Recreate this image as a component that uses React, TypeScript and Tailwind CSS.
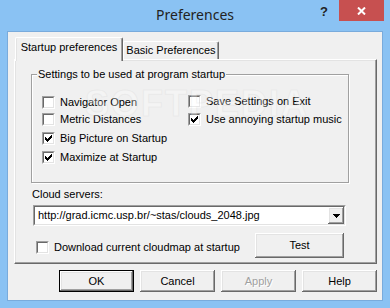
import React from "react";

const font = "font-['Liberation_Sans',Arial,sans-serif] text-[11px] leading-[13px] text-black";

function Check() {
  return (
    <svg width="7" height="7" viewBox="0 0 7 7" shapeRendering="crispEdges">
      <path
        d="M0 2h1v3h-1z M1 3h1v3h-1z M2 4h1v3h-1z M3 3h1v3h-1z M4 2h1v3h-1z M5 1h1v3h-1z M6 0h1v3h-1z"
        fill="#000"
      />
    </svg>
  );
}

function Box({ checked }: { checked?: boolean }) {
  return (
    <span className="flex w-[13px] h-[13px] shrink-0 border border-t-[#a0a0a0] border-l-[#a0a0a0] border-r-white border-b-white">
      <span className="flex flex-1 items-center justify-center bg-white border border-t-[#696969] border-l-[#696969] border-r-[#e3e3e3] border-b-[#e3e3e3]">
        {checked && <Check />}
      </span>
    </span>
  );
}

function CheckRow({ label, checked, className = "" }: { label: string; checked?: boolean; className?: string }) {
  return (
    <div className={`flex items-center ${className}`}>
      <Box checked={checked} />
      <span className="ml-[5px] whitespace-nowrap">{label}</span>
    </div>
  );
}

const raised =
  "bg-[#f0f0f0] shadow-[inset_-1px_-1px_0_#696969,inset_1px_1px_0_#ffffff,inset_-2px_-2px_0_#a0a0a0,inset_2px_2px_0_#e3e3e3]";

function Btn({ label, def, disabled }: { label: string; def?: boolean; disabled?: boolean }) {
  if (def) {
    return (
      <div className="w-[75px] h-[22px] border border-[#000] flex">
        <div className={`flex-1 flex items-center justify-center ${raised}`}>{label}</div>
      </div>
    );
  }
  return (
    <div
      className={`w-[75px] h-[22px] flex items-center justify-center ${raised} ${
        disabled ? "text-[#a0a0a0] [text-shadow:1px_1px_0_#ffffff]" : ""
      }`}
    >
      {label}
    </div>
  );
}

export default function App() {
  return (
    <div className={`w-[390px] h-[308px] bg-[#8ac2f3] overflow-hidden ${font}`}>
      {/* title bar */}
      <div className="h-[31px] flex">
        <div className="flex-1" />
        <div className="font-['Noto_Sans',sans-serif] text-[14px] leading-[30px] text-[#222]">Preferences</div>
        <div className="flex-1 flex justify-end items-start">
          <div className="mt-[5px] mr-[11px] font-['Liberation_Sans',Arial,sans-serif] font-bold text-[13px] leading-[14px] text-[#222]">
            ?
          </div>
          <div className="w-[45px] h-[21px] mr-[6px] bg-[#c75050] flex items-center justify-center">
            <svg width="9" height="8" viewBox="0 0 9 8">
              <path d="M1 0.5 L8 7.5 M8 0.5 L1 7.5" stroke="#fff" strokeWidth="2" />
            </svg>
          </div>
        </div>
      </div>

      {/* client area */}
      <div className="ml-[7px] w-[376px] h-[270px] bg-[#f0f0f0] border border-[#79abdc] flex flex-col relative">
        {/* tabs */}
        <div className="mt-[5px] ml-[7px] flex items-end h-[22px]">
          <div className="relative z-10 w-[108px] h-[24px] -mb-[2px] bg-[#f0f0f0] border-l border-t border-r border-l-white border-t-white border-r-[#696969] rounded-t-[2px] shadow-[inset_1px_0_0_#e3e3e3,inset_-1px_0_0_#a0a0a0] pt-[3px] text-center whitespace-nowrap">
            Startup preferences
          </div>
          <div className="w-[96px] h-[18px] bg-[#f0f0f0] border-l border-t border-r border-l-white border-t-white border-r-[#696969] rounded-t-[2px] shadow-[inset_-1px_0_0_#a0a0a0] pt-[2px] text-center whitespace-nowrap">
            Basic Preferences
          </div>
        </div>

        {/* panel */}
        <div className="ml-[6px] mr-[5px] h-[205px] border border-t-white border-l-white border-r-[#696969] border-b-[#696969] shadow-[inset_-1px_-1px_0_#a0a0a0,inset_1px_1px_0_#e3e3e3] flex flex-col relative">
          {/* group box */}
          <div className="ml-[16px] mt-[14px] w-[318px] h-[109px] relative border border-[#a0a0a0] shadow-[inset_1px_1px_0_#ffffff,1px_1px_0_#ffffff] flex">
            <span className="absolute left-[5px] top-[-7px] px-[1px] bg-[#f0f0f0] whitespace-nowrap">
              Settings to be used at program startup
            </span>
            <div className="ml-[10px] w-[146px] pt-[21px] flex flex-col">
              <CheckRow label="Navigator Open" />
              <CheckRow label="Metric Distances" className="mt-[4px]" />
              <CheckRow label="Big Picture on Startup" checked className="mt-[6px]" />
              <CheckRow label="Maximize at Startup" checked className="mt-[6px]" />
            </div>
            <div className="pt-[20px] flex flex-col">
              <CheckRow label="Save Settings on Exit" />
              <CheckRow label="Use annoying startup music" checked className="mt-[5px]" />
            </div>
          </div>

          <div className="ml-[17px] mt-[5px]">Cloud servers:</div>

          {/* combo */}
          <div className="ml-[18px] mt-[4px] w-[313px] h-[21px] border border-t-[#a0a0a0] border-l-[#a0a0a0] border-r-white border-b-white flex">
            <div className="flex-1 flex items-center bg-white border border-t-[#696969] border-l-[#696969] border-r-[#e3e3e3] border-b-[#e3e3e3]">
              <span className="flex-1 pl-[3px] whitespace-nowrap">http://grad.icmc.usp.br/~stas/clouds_2048.jpg</span>
              <div className={`w-[16px] h-full flex items-center justify-center ${raised}`}>
                <svg width="7" height="4" viewBox="0 0 7 4" shapeRendering="crispEdges">
                  <path d="M0 0h7v1h-7z M1 1h5v1h-5z M2 2h3v1h-3z M3 3h1v1h-1z" fill="#000" />
                </svg>
              </div>
            </div>
          </div>

          {/* bottom row */}
          <div className="mt-[7px] flex items-start">
            <CheckRow label="Download current cloudmap at startup" className="ml-[21px] mt-[8px]" />
            <div className={`ml-auto mr-[32px] w-[89px] h-[25px] flex items-center justify-center ${raised}`}>Test</div>
          </div>

          {/* watermark */}
          <div className="pointer-events-none absolute left-[70px] top-[24px] font-['Liberation_Sans',Arial,sans-serif] font-bold text-[36px] leading-[40px] tracking-[2px] text-white/30 [-webkit-text-stroke:1px_rgba(200,200,200,0.2)]">
            SOFTPEDIA
          </div>
        </div>

        {/* buttons */}
        <div className="mt-[6px] mr-[5px] flex justify-end gap-[6px]">
          <Btn label="OK" def />
          <Btn label="Cancel" />
          <Btn label="Apply" disabled />
          <Btn label="Help" />
        </div>
      </div>
    </div>
  );
}
